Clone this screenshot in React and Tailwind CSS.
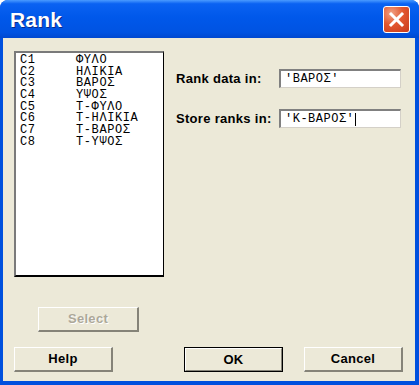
export default function App() {
  const cols = [
    ["C1", "ΦΥΛΟ"],
    ["C2", "ΗΛΙΚΙΑ"],
    ["C3", "ΒΑΡΟΣ"],
    ["C4", "ΥΨΟΣ"],
    ["C5", "Τ-ΦΥΛΟ"],
    ["C6", "Τ-ΗΛΙΚΙΑ"],
    ["C7", "Τ-ΒΑΡΟΣ"],
    ["C8", "Τ-ΥΨΟΣ"],
  ];
  const sans = { fontFamily: '"Liberation Sans", Arial, sans-serif' };
  const mono = { fontFamily: '"Liberation Mono", "Courier New", monospace' };
  const btn =
    "w-[99px] h-[25px] flex items-center justify-center text-[13px] tracking-[0.3px] font-bold bg-[#ECE9D8] border-t border-l border-t-white border-l-white border-r-2 border-b-2 border-r-[#858378] border-b-[#858378]";
  const input =
    "w-[122px] h-[19px] bg-white border-t-2 border-l-2 border-t-[#808080] border-l-[#808080] border-r border-b border-r-[#d4d0c8] border-b-[#d4d0c8] flex items-center pl-[4px] text-[12px] tracking-[0.5px] text-black";
  return (
    <div className="w-[419px] h-[385px] flex flex-col rounded-t-[8px] overflow-hidden bg-[#0050de]" style={sans}>
      <div className="h-[38px] shrink-0 flex items-center justify-between pl-[10px] pr-[9px] bg-[linear-gradient(to_bottom,#4a9bff_0%,#0a62f2_10%,#0058ea_45%,#0053e2_85%,#0048d0_100%)]">
        <span className="text-white text-[21px] font-bold tracking-[0.2px] [text-shadow:1px_1px_0_#0a2a8a] pt-[2px]">Rank</span>
        <div className="w-[27px] h-[27px] rounded-[3px] border border-white bg-[radial-gradient(circle_at_30%_25%,#f0a184_0%,#e2572f_45%,#c8391a_100%)] flex items-center justify-center">
          <svg width="17" height="17" viewBox="0 0 17 17">
            <path d="M3 3 L14 14 M14 3 L3 14" stroke="white" strokeWidth="3" strokeLinecap="square" />
          </svg>
        </div>
      </div>
      <div className="flex-1 ml-[3px] mr-[4px] mb-[4px] bg-[#ECE9D8] flex flex-col pl-[11px] pt-[13px]">
        <div className="flex">
          <div className="w-[150px] h-[226px] bg-white border-t-2 border-l-2 border-t-[#7a7a7a] border-l-[#7a7a7a] border-r border-b-2 border-r-black border-b-black pt-[2px] pl-[4px]">
            {cols.map(([c, n]) => (
              <div key={c} className="flex h-[11.7px] items-center text-[12px] leading-[11.7px] tracking-[0.6px] text-black" style={mono}>
                <span className="w-[56px]">{c}</span>
                <span>{n}</span>
              </div>
            ))}
          </div>
          <div className="ml-[12px] pt-[18px] flex flex-col gap-[21px]">
            <div className="flex items-center h-[19px]">
              <span className="w-[103px] text-[13px] tracking-[0.3px] font-bold text-black">Rank data in:</span>
              <div className={input} style={mono}>'ΒΑΡΟΣ'</div>
            </div>
            <div className="flex items-center h-[19px]">
              <span className="w-[103px] text-[13px] tracking-[0.3px] font-bold text-black">Store ranks in:</span>
              <div className={input} style={mono}>
                'Κ-ΒΑΡΟΣ'<span className="w-px h-[13px] bg-black ml-px" />
              </div>
            </div>
          </div>
        </div>
        <div className="mt-[30px] ml-[24px]">
          <div className={btn + " w-[101px] text-[#aca899] [text-shadow:1px_1px_0_#ffffff]"}>Select</div>
        </div>
        <div className="mt-[15px] flex">
          <div className={btn}>Help</div>
          <div className="ml-[71px] w-[99px] h-[25px] border border-black">
            <div className="w-full h-full flex items-center justify-center text-[13px] tracking-[0.3px] font-bold bg-[#ECE9D8] border-t border-l border-t-white border-l-white border-r border-b border-r-[#858378] border-b-[#858378]">OK</div>
          </div>
          <div className={btn + " ml-[21px]"}>Cancel</div>
        </div>
      </div>
    </div>
  );
}
